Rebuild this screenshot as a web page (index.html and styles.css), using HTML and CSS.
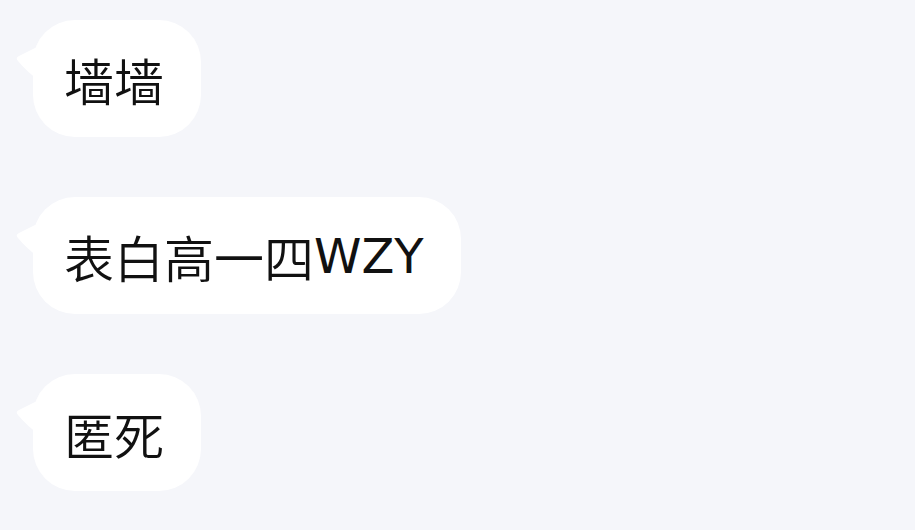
FILE: index.html
```html
<!DOCTYPE html>
<html lang="zh">
<head>
<meta charset="utf-8">
<link rel="stylesheet" href="styles.css">
</head>
<body>
<div class="chat">
  <div class="msg">
    <svg class="tail" width="26" height="40" viewBox="0 0 26 40"><path d="M24 0 L4 10 Q0 12 3 15 Q12 26 26 36 Z" fill="#fff"/></svg>
    <div class="bubble">墙墙</div>
  </div>
  <div class="msg">
    <svg class="tail" width="26" height="40" viewBox="0 0 26 40"><path d="M24 0 L4 10 Q0 12 3 15 Q12 26 26 36 Z" fill="#fff"/></svg>
    <div class="bubble">表白高一四<span class="latin">WZY</span></div>
  </div>
  <div class="msg">
    <svg class="tail" width="26" height="40" viewBox="0 0 26 40"><path d="M24 0 L4 10 Q0 12 3 15 Q12 26 26 36 Z" fill="#fff"/></svg>
    <div class="bubble">匿死</div>
  </div>
</div>
</body>
</html>
```
FILE: styles.css
```css
html, body {
  margin: 0;
  padding: 0;
  background: #f5f6fa;
  width: 915px;
  height: 530px;
  overflow: hidden;
}
.chat {
  display: flex;
  flex-direction: column;
  align-items: flex-start;
  gap: 60px;
  padding: 20px 0 0 33px;
}
.msg {
  position: relative;
}
.tail {
  position: absolute;
  left: -18px;
  top: 26px;
}
.bubble {
  display: flex;
  align-items: center;
  height: 117px;
  box-sizing: border-box;
  padding: 0 37px 0 31px;
  background: #fff;
  border-radius: 42px;
  font-family: "Noto Sans CJK SC", "Noto Sans", sans-serif;
  font-weight: 350;
  font-size: 50px;
  color: #111;
  line-height: 1;
}
.latin {
  font-family: "DejaVu Sans", sans-serif;
  font-weight: 400;
  font-size: 48px;
}
```
